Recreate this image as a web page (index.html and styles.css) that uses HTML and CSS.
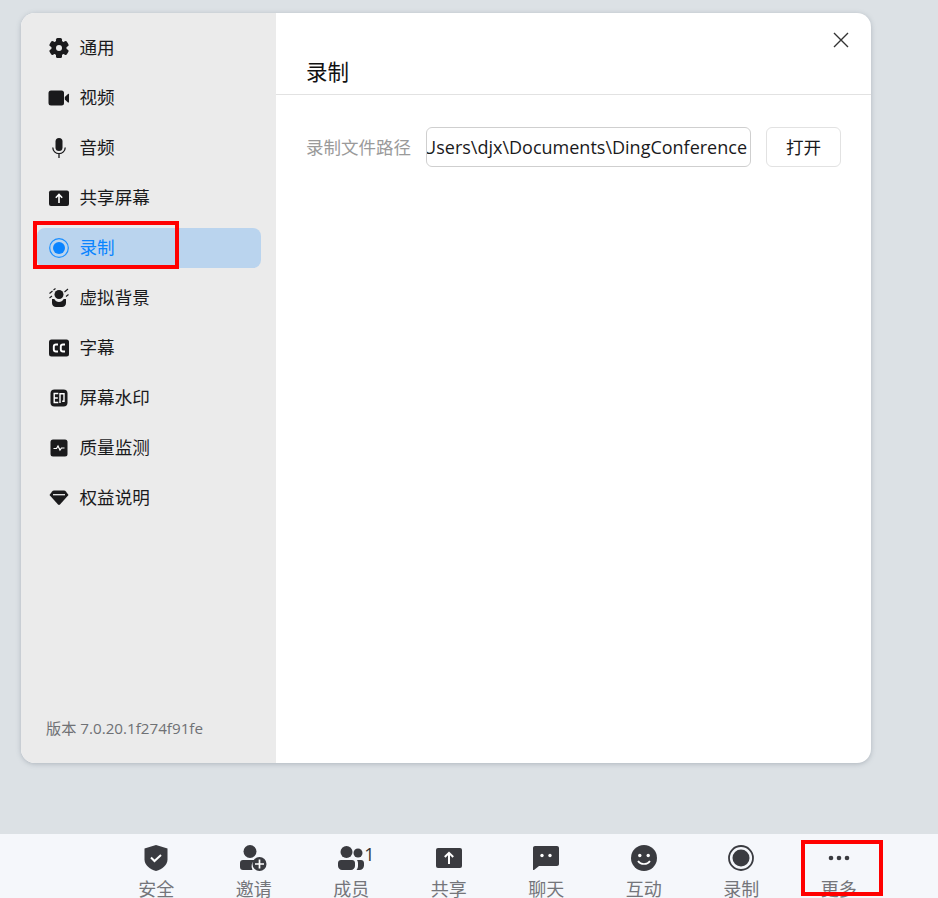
FILE: index.html
```html
<!DOCTYPE html>
<html lang="zh-CN">
<head>
<meta charset="utf-8">
<title>设置 - 录制</title>
<link rel="stylesheet" href="styles.css">
</head>
<body>
<div class="page">
  <section class="dialog">
    <aside class="sidebar">
      <nav class="menu">
        <a class="menu-item"><svg class="mi" viewBox="0 0 20 20"><g><circle cx="10" cy="10" r="7.600"/><rect x="7" y="0" width="6" height="20" rx="1.500"/><rect x="7" y="0" width="6" height="20" rx="1.500" transform="rotate(60 10 10)"/><rect x="7" y="0" width="6" height="20" rx="1.500" transform="rotate(120 10 10)"/></g><circle cx="10" cy="10" r="3" fill="#ebebeb"/></svg><span>通用</span></a>
        <a class="menu-item"><svg class="mi" viewBox="0 0 20 20"><rect x="-.5" y="2.500" width="15.500" height="15" rx="2.500"/><path d="M15.800 9l3.200-3c.5-.4 1-.2 1 .4v7.600c0 .6-.5.800-1 .4l-3.200-3z"/></svg><span>视频</span></a>
        <a class="menu-item"><svg class="mi" viewBox="0 0 20 20"><rect x="6.500" y="0" width="7" height="13" rx="3.500"/><path d="M3.800 9.500a6.200 6.200 0 0 0 12.400 0M10 15.700V20" fill="none" stroke="#1a1a1c" stroke-width="1.300"/></svg><span>音频</span></a>
        <a class="menu-item"><svg class="mi" viewBox="0 0 20 20"><rect x="0" y="2.500" width="20" height="15.500" rx="2"/><path d="M10 15V6.500M6.800 9.700L10 6.500l3.200 3.200" fill="none" stroke="#fff" stroke-width="1.600"/></svg><span>共享屏幕</span></a>
        <a class="menu-item active"><svg class="mi" viewBox="0 0 20 20"><circle cx="10" cy="10" r="9.300" fill="none" stroke="#1b8fff" stroke-width="1.200"/><circle cx="10" cy="10" r="6" fill="#0a84ff"/></svg><span>录制</span></a>
        <a class="menu-item"><svg class="mi" viewBox="0 0 20 20"><circle cx="10" cy="6.500" r="4.500"/><path d="M3 11h2.300c1 1.900 2.700 2.900 4.700 2.900s3.700-1 4.700-2.900H17v4c0 2.500-2 4-4 4H7c-2 0-4-1.500-4-4z"/><path d="M.5 5.500L3.500 3M4.500 2L6.500.5M.5 10L3 8M15.500 4L19 1M17 8.500l2.500-2" fill="none" stroke="#1a1a1c" stroke-width="1.100"/></svg><span>虚拟背景</span></a>
        <a class="menu-item"><svg class="mi" viewBox="0 0 20 20"><rect x="0" y="1.500" width="20" height="17" rx="2.500"/><path d="M9 6.500H7c-1.300 0-2.200.8-2.200 2v3c0 1.200.9 2 2.200 2h2M16 6.500h-2c-1.300 0-2.200.8-2.200 2v3c0 1.200.9 2 2.200 2h2" fill="none" stroke="#fff" stroke-width="1.900"/></svg><span>字幕</span></a>
        <a class="menu-item"><svg class="mi" viewBox="0 0 20 20"><rect x="1.500" y="1.500" width="17" height="17" rx="4"/><path d="M9.300 5.500H5.200v9h4.100M5.200 10h3.600M11 5v10M11 5.700h4v7.500h-1.800" fill="none" stroke="#fff" stroke-width="1.400"/></svg><span>屏幕水印</span></a>
        <a class="menu-item"><svg class="mi" viewBox="0 0 20 20"><rect x="1.500" y="1.500" width="17" height="17" rx="2.500"/><path d="M4.500 10.500h3l1.500-2.500 2 4 1.500-2h3" fill="none" stroke="#fff" stroke-width="1.200"/></svg><span>质量监测</span></a>
        <a class="menu-item"><svg class="mi" viewBox="0 0 20 20"><path d="M5 2.500h10c.8 0 1.500.4 1.900.9L19.500 7 11 16.500c-.6.600-1.400.6-2 0L.5 7l2.600-3.600c.4-.5 1.100-.9 1.900-.9z"/><path d="M4 6.700h12" stroke="#ebebeb" stroke-width="1.300"/></svg><span>权益说明</span></a>
      </nav>
      <p class="version">版本 7.0.20.1f274f91fe</p>
    </aside>
    <div class="content">
      <header class="content-head">
        <h1 class="title">录制</h1>
        <button class="close" aria-label="关闭"><svg viewBox="0 0 16 16"><path d="M1 1l14 14M15 1L1 15" fill="none" stroke="#333" stroke-width="1.400"/></svg></button>
      </header>
      <div class="path-row">
        <label class="path-label">录制文件路径</label>
        <div class="path-input"><span class="path-text">C:\Users\djx\Documents\DingConference</span></div>
        <button class="open-btn">打开</button>
      </div>
    </div>
  </section>
  <footer class="toolbar">
    <div class="tool"><svg class="ti" viewBox="0 0 24 26"><path d="M12 0l11.500 3.500v11c0 5.500-5 9.500-11.500 11.500C5.500 24 .5 20 .5 14.500v-11z" fill="#3a3b40"/><path d="M7 12.500l3.500 3.500 6.500-6" fill="none" stroke="#fff" stroke-width="2"/></svg><span class="tl">安全</span></div>
    <div class="tool"><svg class="ti ti-invite" viewBox="0 0 27 26"><circle cx="10" cy="6.500" r="6.500" fill="#3a3b40"/><path d="M3 15h12a7.500 7.500 0 0 0-2.500 10H3c-1.800 0-3-1.200-3-3v-4c0-1.800 1.200-3 3-3z" fill="#3a3b40"/><circle cx="19.500" cy="19" r="7" fill="#3a3b40"/><path d="M19.500 14.500v9M15 19h9" stroke="#fff" stroke-width="1.700"/></svg><span class="tl">邀请</span></div>
    <div class="tool"><span class="members"><svg class="ti" viewBox="0 0 26 24"><circle cx="8.500" cy="6" r="6" fill="#3a3b40"/><circle cx="20" cy="7" r="4.500" fill="#3a3b40"/><path d="M3 14h11c1.700 0 3 1.300 3 3v3c0 2.300-2 4-4 4H4c-2 0-4-1.700-4-4v-3c0-1.700 1.300-3 3-3z" fill="#3a3b40"/><path d="M19 14h4c1.700 0 3 1.300 3 3v2.500c0 2.500-2 4.500-4.500 4.500H18.500c1-1.200 1.500-2.500 1.500-4v-3c0-1-.3-2-1-3z" fill="#3a3b40"/></svg><span class="count">1</span></span><span class="tl">成员</span></div>
    <div class="tool"><svg class="ti" viewBox="0 0 26 22"><rect width="26" height="20" y="1" rx="2" fill="#3a3b40"/><path d="M13 17V6M8.800 10L13 5.800 17.200 10" fill="none" stroke="#fff" stroke-width="2"/></svg><span class="tl">共享</span></div>
    <div class="tool"><svg class="ti" viewBox="0 0 26 24"><path d="M2 0h22c1.100 0 2 .9 2 2v16c0 1.100-.9 2-2 2H6l-5 4c-.5.300-1 0-1-.5V2C0 .9.900 0 2 0z" fill="#3a3b40"/><circle cx="9" cy="9.500" r="1.700" fill="#fff"/><circle cx="17" cy="9.500" r="1.700" fill="#fff"/></svg><span class="tl">聊天</span></div>
    <div class="tool"><svg class="ti" viewBox="0 0 26 26"><circle cx="13" cy="13" r="13" fill="#3a3b40"/><circle cx="8.800" cy="10.500" r="1.700" fill="#fff"/><circle cx="17.200" cy="10.500" r="1.700" fill="#fff"/><path d="M7 16c1.300 2 3.500 3 6 3s4.700-1 6-3" fill="none" stroke="#fff" stroke-width="1.700"/></svg><span class="tl">互动</span></div>
    <div class="tool"><svg class="ti" viewBox="0 0 26 26"><circle cx="13" cy="13" r="12" fill="none" stroke="#3a3b40" stroke-width="1.800"/><circle cx="13" cy="13" r="8.500" fill="#3a3b40"/></svg><span class="tl">录制</span></div>
    <div class="tool"><svg class="ti" viewBox="0 0 26 26"><circle cx="5" cy="13" r="2.300" fill="#3a3b40"/><circle cx="13" cy="13" r="2.300" fill="#3a3b40"/><circle cx="21" cy="13" r="2.300" fill="#3a3b40"/></svg><span class="tl">更多</span></div>
  </footer>
  <div class="mark mark-record"></div>
  <div class="mark mark-more"></div>
</div>
</body>
</html>
```

FILE: styles.css
```css
* { box-sizing: border-box; }
html, body { margin: 0; height: 100%; overflow: hidden; }
body { font-family: "Noto Sans CJK SC", "Open Sans", sans-serif; color: #1a1a1c; }
.page { position: relative; height: 898px; background: #dce1e5; display: flex; flex-direction: column; }

.dialog { width: 850px; height: 750px; margin: 13px 0 0 21px; display: flex; border-radius: 14px; overflow: hidden; background: #fff; box-shadow: 0 1px 5px rgba(90,100,115,.35); }

.sidebar { width: 255px; background: #ebebeb; display: flex; flex-direction: column; justify-content: space-between; padding: 15px 15px 24px 16px; }
.menu { display: flex; flex-direction: column; gap: 10px; }
.menu-item { height: 40px; display: flex; align-items: center; gap: 11px; padding-left: 11.500px; border-radius: 8px; font-size: 17.6px; color: #1a1a1c; }
.menu-item span { margin-top: -3px; }
.menu-item.active { background: #bad4ee; color: #0a84ff; }
.mi { width: 20px; height: 20px; flex: none; fill: #1a1a1c; overflow: visible; }
.version { margin: 0 0 0 9px; font-family: "Open Sans", "Noto Sans CJK SC", sans-serif; font-size: 15.2px; line-height: 22px; color: #6f7175; }

.content { flex: 1; min-width: 0; }
.content-head { height: 82px; border-bottom: 1px solid #e2e2e2; display: flex; justify-content: space-between; padding: 19px 22px 0 30px; }
.title { margin: 24px 0 0; font-size: 21.5px; line-height: 30px; font-weight: 400; color: #111; }
.close { width: 16px; height: 16px; padding: 0; border: 0; background: none; }
.close svg { display: block; width: 16px; height: 16px; }

.path-row { display: flex; align-items: center; padding: 32px 30px 0; }
.path-label { width: 120px; flex: none; margin-top: -2px; font-size: 17.5px; color: #9a9a9a; }
.path-input { width: 325px; height: 40px; flex: none; border: 1px solid #cfcfcf; border-radius: 6px; overflow: hidden; display: flex; justify-content: flex-end; align-items: center; padding-right: 3px; }
.path-text { font-family: "Open Sans", sans-serif; font-size: 18px; color: #1a1a1c; white-space: nowrap; }
.open-btn { width: 75px; height: 40px; margin-left: 15px; flex: none; background: #fff; border: 1px solid #e2e2e2; border-radius: 6px; font: inherit; font-size: 17.6px; color: #1a1a1c; padding: 0 0 2px; }

.toolbar { margin-top: auto; height: 64px; background: #f5f7fb; display: flex; padding-left: 107.500px; overflow: hidden; }
.tool { width: 97.500px; flex: none; display: flex; flex-direction: column; align-items: center; padding-top: 11px; }
.ti { width: 26px; height: 26px; display: block; flex: none; }
.ti-invite { width: 27px; }
.members { position: relative; display: block; height: 26px; }
.count { position: absolute; left: 26px; top: -3px; font-family: "Open Sans", sans-serif; font-size: 18px; line-height: 24px; color: #333; }
.tl { margin-top: 4px; font-size: 18px; line-height: 26px; color: #74757a; white-space: nowrap; }

.mark { position: absolute; border: 4px solid #f00; }
.mark-record { left: 33px; top: 221px; width: 146px; height: 48px; }
.mark-more { left: 801px; top: 840px; width: 82px; height: 56px; }
```
